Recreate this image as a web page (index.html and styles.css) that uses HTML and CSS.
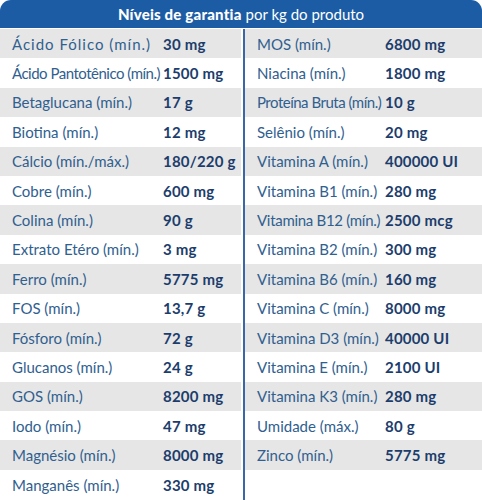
FILE: index.html
```html
<!DOCTYPE html>
<html lang="pt">
<head>
<meta charset="utf-8">
<link rel="stylesheet" href="styles.css">
</head>
<body>
<div class="card">
  <div class="head"><b>Níveis de garantia</b> por kg do produto</div>
  <div class="cols">
    <div class="col col-left">
      <div class="row"><span class="lbl wide">Ácido Fólico (mín.)</span><span class="val">30 mg</span></div>
      <div class="row"><span class="lbl tight">Ácido Pantotênico (mín.)</span><span class="val">1500 mg</span></div>
      <div class="row"><span class="lbl">Betaglucana (mín.)</span><span class="val">17 g</span></div>
      <div class="row"><span class="lbl">Biotina (mín.)</span><span class="val">12 mg</span></div>
      <div class="row"><span class="lbl">Cálcio (mín./máx.)</span><span class="val">180/220 g</span></div>
      <div class="row"><span class="lbl">Cobre (mín.)</span><span class="val">600 mg</span></div>
      <div class="row"><span class="lbl">Colina (mín.)</span><span class="val">90 g</span></div>
      <div class="row"><span class="lbl">Extrato Etéro (mín.)</span><span class="val">3 mg</span></div>
      <div class="row"><span class="lbl">Ferro (mín.)</span><span class="val">5775 mg</span></div>
      <div class="row"><span class="lbl">FOS (mín.)</span><span class="val">13,7 g</span></div>
      <div class="row"><span class="lbl">Fósforo (mín.)</span><span class="val">72 g</span></div>
      <div class="row"><span class="lbl">Glucanos (mín.)</span><span class="val">24 g</span></div>
      <div class="row"><span class="lbl">GOS (mín.)</span><span class="val">8200 mg</span></div>
      <div class="row"><span class="lbl">Iodo (mín.)</span><span class="val">47 mg</span></div>
      <div class="row"><span class="lbl">Magnésio (mín.)</span><span class="val">8000 mg</span></div>
      <div class="row"><span class="lbl">Manganês (mín.)</span><span class="val">330 mg</span></div>
    </div>
    <div class="divider"></div>
    <div class="col col-right">
      <div class="row"><span class="lbl">MOS (mín.)</span><span class="val">6800 mg</span></div>
      <div class="row"><span class="lbl">Niacina (mín.)</span><span class="val">1800 mg</span></div>
      <div class="row"><span class="lbl tight">Proteína Bruta (mín.)</span><span class="val">10 g</span></div>
      <div class="row"><span class="lbl">Selênio (mín.)</span><span class="val">20 mg</span></div>
      <div class="row"><span class="lbl">Vitamina A (mín.)</span><span class="val">400000 UI</span></div>
      <div class="row"><span class="lbl">Vitamina B1 (mín.)</span><span class="val">280 mg</span></div>
      <div class="row"><span class="lbl snug">Vitamina B12 (mín.)</span><span class="val">2500 mcg</span></div>
      <div class="row"><span class="lbl">Vitamina B2 (mín.)</span><span class="val">300 mg</span></div>
      <div class="row"><span class="lbl">Vitamina B6 (mín.)</span><span class="val">160 mg</span></div>
      <div class="row"><span class="lbl">Vitamina C (mín.)</span><span class="val">8000 mg</span></div>
      <div class="row"><span class="lbl">Vitamina D3 (mín.)</span><span class="val">40000 UI</span></div>
      <div class="row"><span class="lbl">Vitamina E (mín.)</span><span class="val">2100 UI</span></div>
      <div class="row"><span class="lbl">Vitamina K3 (mín.)</span><span class="val">280 mg</span></div>
      <div class="row"><span class="lbl">Umidade (máx.)</span><span class="val">80 g</span></div>
      <div class="row"><span class="lbl">Zinco (mín.)</span><span class="val">5775 mg</span></div>
    </div>
  </div>
</div>
</body>
</html>
```
FILE: styles.css
```css
html, body {
  margin: 0;
  padding: 0;
  background: #ffffff;
}
body {
  width: 482px;
  height: 500px;
  overflow: hidden;
  font-family: Lato, "Noto Sans", sans-serif;
}
.card {
  display: flex;
  flex-direction: column;
}
.head {
  height: 28px;
  background: #1b5ca5;
  color: #ffffff;
  border-radius: 11px 11px 0 0;
  display: flex;
  align-items: center;
  justify-content: center;
  gap: 4px;
  font-size: 15px;
  padding-bottom: 1px;
  box-sizing: border-box;
}
.head b {
  font-weight: 900;
  letter-spacing: 0.2px;
}
.cols {
  display: flex;
  padding-top: 1px;
}
.col {
  display: flex;
  flex-direction: column;
}
.col-left {
  width: 241px;
}
.divider {
  width: 2px;
  margin-left: 2px;
  background: #3a68a6;
  height: 480px;
}
.col-right {
  flex: 1;
}
.row {
  height: 29.4px;
  display: flex;
  align-items: center;
  white-space: nowrap;
  font-size: 15px;
  padding-left: 12px;
}
.row:nth-child(odd) {
  background: #e6e6e6;
}
.lbl {
  color: #30608f;
}
.lbl.wide {
  letter-spacing: 1px;
}
.lbl.tight {
  letter-spacing: -0.5px;
}
.lbl.snug {
  letter-spacing: -0.3px;
}
.col-left .lbl {
  min-width: 148px;
}
.col-right .lbl {
  min-width: 125px;
}
.val {
  margin-left: 3px;
  color: #1c3d6c;
  font-weight: 700;
  letter-spacing: 0.2px;
}
```
